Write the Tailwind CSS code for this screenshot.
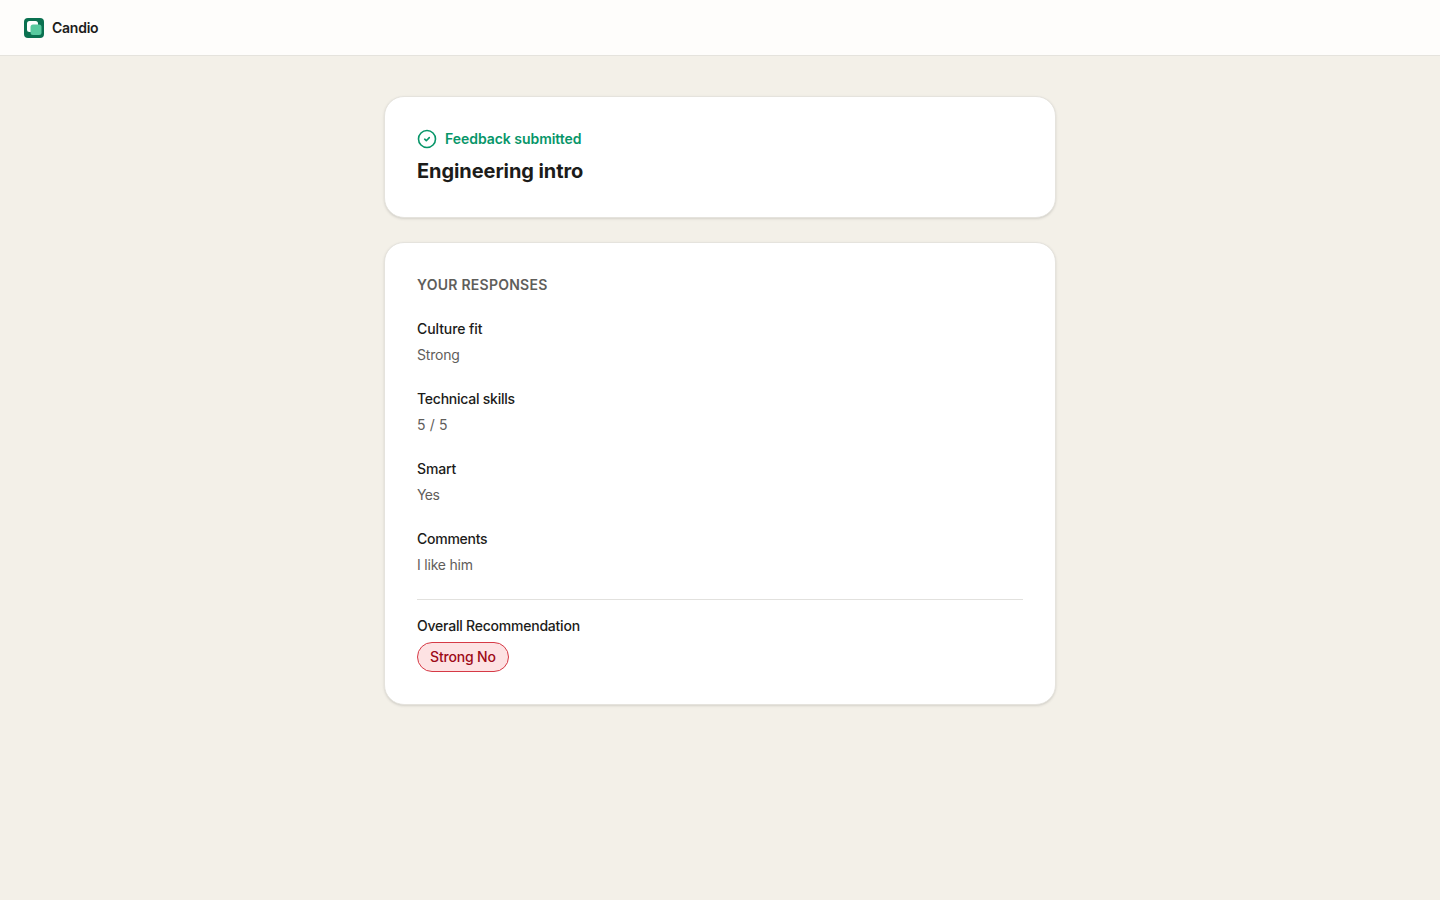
<!DOCTYPE html>
<html lang="en">
<head>
  <meta charset="UTF-8" />
  <meta name="viewport" content="width=device-width, initial-scale=1.0"/>
  <title>Candio | Feedback</title>
  <script src="https://cdn.jsdelivr.net/npm/@tailwindcss/browser@4"></script>
</head>
<body class="min-h-screen bg-[#f3f0e8] font-['Inter',sans-serif] text-sm text-[#1c1c1a] antialiased">

  <!-- Header -->
  <header class="flex h-14 items-center gap-2 border-b border-[#e5e3dd] bg-[#fefdfb] px-6">
    <svg class="size-5" viewBox="0 0 20 20" fill="none">
      <rect width="20" height="20" rx="4" fill="#0b7150" />
      <rect x="3" y="3" width="11" height="11" rx="2.5" fill="#fff" />
      <rect x="6.5" y="6.5" width="11" height="10.5" rx="2.5" fill="#58ca9f" />
    </svg>
    <span class="font-semibold tracking-[-0.018em]">Candio</span>
  </header>

  <main class="mx-auto max-w-2xl space-y-6 py-10">
    <!-- Status card -->
    <section class="rounded-[20px] border border-[#e5e3dd] bg-white p-8 shadow-sm">
      <div class="flex items-center gap-2 text-[#079669]">
        <svg class="size-5" viewBox="0 0 20 20" fill="none" stroke="currentColor" stroke-width="1.6" stroke-linecap="round" stroke-linejoin="round">
          <circle cx="10" cy="10" r="8.5" />
          <path d="M7.7 10.2l1.6 1.5 3-3.1" />
        </svg>
        <span class="font-semibold tracking-[-0.003em]">Feedback submitted</span>
      </div>
      <h1 class="mt-2 text-xl/7 font-bold tracking-[-0.004em]">Engineering intro</h1>
    </section>

    <!-- Responses card -->
    <section class="rounded-[20px] border border-[#e5e3dd] bg-white p-8 shadow-sm">
      <h2 class="font-semibold tracking-[0.018em] text-[#5f5e5b] uppercase">Your responses</h2>
      <dl class="mt-6 space-y-6">
        <div>
          <dt class="font-medium tracking-[-0.006em]">Culture fit</dt>
          <dd class="mt-1.5 tracking-[-0.013em] text-[#5f5e5b]">Strong</dd>
        </div>
        <div>
          <dt class="font-medium tracking-[-0.017em]">Technical skills</dt>
          <dd class="mt-1.5 tracking-[0.01em] text-[#5f5e5b]">5 / 5</dd>
        </div>
        <div>
          <dt class="font-medium tracking-[-0.01em]">Smart</dt>
          <dd class="mt-1.5 tracking-[-0.04em] text-[#5f5e5b]">Yes</dd>
        </div>
        <div>
          <dt class="font-medium tracking-[-0.018em]">Comments</dt>
          <dd class="mt-1.5 tracking-[-0.015em] text-[#5f5e5b]">I like him</dd>
        </div>
      </dl>
      <div class="mt-6 border-t border-[#e2e1de] pt-4">
        <p class="font-medium tracking-[-0.016em]">Overall Recommendation</p>
        <div class="mt-1.5 flex">
          <span class="rounded-full border border-[#d63a46] bg-[#fde2e3] px-3 py-1 font-medium tracking-[-0.012em] text-[#9d0b18]">Strong No</span>
        </div>
      </div>
    </section>
  </main>

</body>
</html>
